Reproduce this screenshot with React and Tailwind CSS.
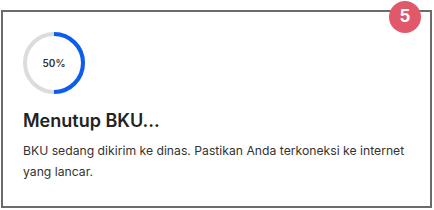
export default function App() {
  return (
    <div className="w-[434px] h-[210px] bg-white pt-[10px] pl-[1px] font-['Inter',sans-serif]">
      <div className="relative w-[431px] h-[198px] border-2 border-[#6b6b6b] bg-white pl-[20px] pt-[20px]">
        {/* progress ring */}
        <div className="relative w-[62px] h-[62px]">
          <svg width="62" height="62" viewBox="0 0 62 62">
            <circle cx="31" cy="31" r="29" fill="none" stroke="#dcdcdc" strokeWidth="4" />
            <path d="M31 2 A29 29 0 0 1 31 60" fill="none" stroke="#0b5cf0" strokeWidth="4" />
          </svg>
          <span className="absolute inset-0 flex items-center justify-center text-[10px] font-semibold text-[#333]">
            50%
          </span>
        </div>

        <h1 className="mt-[15px] text-[18px] leading-[24px] font-semibold text-[#222]">
          Menutup BKU...
        </h1>
        <p className="mt-[7px] pr-[12px] text-[12.2px] leading-[21px] text-[#333]">
          BKU sedang dikirim ke dinas. Pastikan Anda terkoneksi ke internet yang lancar.
        </p>

        {/* badge */}
        <div className="absolute -top-[11px] right-[9px] w-[32px] h-[32px] rounded-full bg-[#e0586a] flex items-center justify-center text-white text-[17px] font-bold">
          5
        </div>
      </div>
    </div>
  );
}
